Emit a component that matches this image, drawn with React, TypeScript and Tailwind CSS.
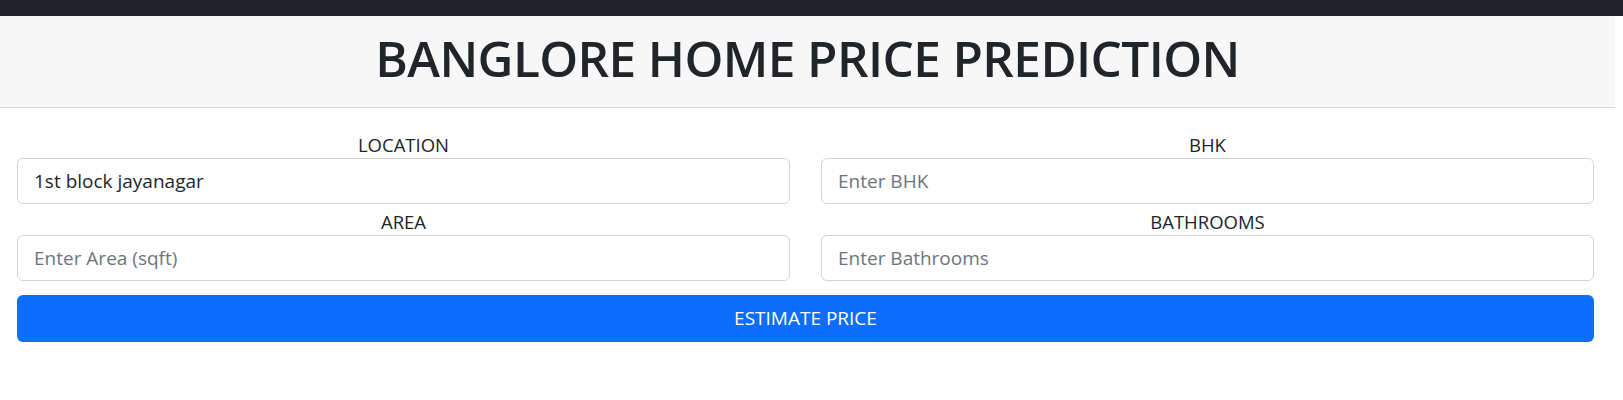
import React from "react";

const fields = [
  { label: "LOCATION", placeholder: "", value: "1st block jayanagar" },
  { label: "BHK", placeholder: "Enter BHK", value: "" },
  { label: "AREA", placeholder: "Enter Area (sqft)", value: "" },
  { label: "BATHROOMS", placeholder: "Enter Bathrooms", value: "" },
];

export default function App() {
  return (
    <div className="min-h-[400px] bg-white text-[#212529] [font-family:'Open_Sans',sans-serif]">
      <div className="h-4 bg-[#212529]" />
      <div className="mr-2">
        <header className="flex h-[92px] items-center justify-center rounded-tr-[4px] border-b border-[#d9d9d9] bg-[#f7f7f7] pb-[6px]">
          <h1 className="text-[49.5px] font-semibold leading-none tracking-[-0.6px] text-[#212529]">
            BANGLORE HOME PRICE PREDICTION
          </h1>
        </header>
      </div>
      <form
        className="pl-[17px] pr-[29px] pt-[23px]"
        onSubmit={(e) => e.preventDefault()}
      >
        <div className="grid grid-cols-2 gap-x-[31px] gap-y-[4px]">
          {fields.map((f) => (
            <div key={f.label} className="flex flex-col">
              <label className="text-center text-[18.5px] leading-[27px] text-[#212529]">
                {f.label}
              </label>
              <input
                className="h-[46px] w-full rounded-[6px] border border-[#ced4da] bg-white px-[16px] text-[19px] text-[#212529] outline-none placeholder:text-[#6c757d]"
                placeholder={f.placeholder}
                defaultValue={f.value}
              />
            </div>
          ))}
        </div>
        <button
          type="submit"
          className="mt-[14px] flex h-[47px] w-full items-center justify-center rounded-[6px] bg-[#0d6efd] text-[19px] text-white"
        >
          ESTIMATE PRICE
        </button>
      </form>
    </div>
  );
}
